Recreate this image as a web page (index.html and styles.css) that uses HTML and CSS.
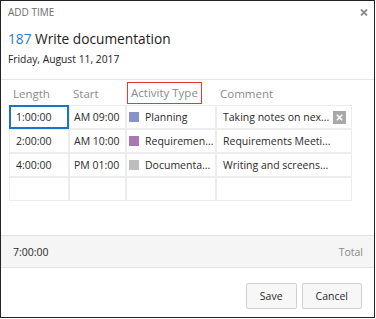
FILE: index.html
```html
<!DOCTYPE html>
<html lang="en">
<head>
  <meta charset="UTF-8">
  <title>Add Time</title>
  <link rel="stylesheet" href="styles.css">
</head>
<body>

<div class="dialog">
  <div class="dialog-head">
    <span class="dialog-title">ADD TIME</span>
    <svg class="close" width="8" height="7" viewBox="0 0 8 7">
      <path d="M1 0.5 L7 6.5 M7 0.5 L1 6.5" stroke="#8c8c8c" stroke-width="1.8"/>
    </svg>
  </div>

  <div class="task">
    <div class="task-name"><span class="task-id">187</span> Write documentation</div>
    <div class="task-date">Friday, August 11, 2017</div>
  </div>

  <table class="grid">
    <colgroup>
      <col class="col-length">
      <col class="col-start">
      <col class="col-type">
      <col class="col-comment">
    </colgroup>
    <thead>
      <tr>
        <th>Length</th>
        <th>Start</th>
        <th><span class="focused-head">Activity Type</span></th>
        <th>Comment</th>
      </tr>
    </thead>
    <tbody>
      <tr>
        <td class="active">1:00:00</td>
        <td>AM 09:00</td>
        <td><span class="swatch planning"></span>Planning</td>
        <td class="comment">Taking notes on nex...
          <span class="clear">
            <svg width="7" height="7" viewBox="0 0 7 7">
              <path d="M0.8 0.8 L6.2 6.2 M6.2 0.8 L0.8 6.2" stroke="#fff" stroke-width="1.6"/>
            </svg>
          </span>
        </td>
      </tr>
      <tr>
        <td>2:00:00</td>
        <td>AM 10:00</td>
        <td><span class="swatch requirements"></span>Requiremen...</td>
        <td>Requirements Meeti...</td>
      </tr>
      <tr>
        <td>4:00:00</td>
        <td>PM 01:00</td>
        <td><span class="swatch documentation"></span>Documenta...</td>
        <td>Writing and screens...</td>
      </tr>
      <tr>
        <td></td>
        <td></td>
        <td></td>
        <td></td>
      </tr>
    </tbody>
  </table>

  <div class="summary">
    <span>7:00:00</span>
    <span class="total">Total</span>
  </div>

  <div class="actions">
    <button>Save</button>
    <button>Cancel</button>
  </div>
</div>

</body>
</html>
```

FILE: styles.css
```css
body {
  margin: 0;
  font-family: "Open Sans", "Noto Sans", sans-serif;
  color: #2a2a2a;
  background: #fff;
}
.dialog {
  width: 375px;
  height: 318px;
  box-sizing: border-box;
  border: 1px solid #222;
  display: flex;
  flex-direction: column;
}
.dialog-head {
  display: flex;
  justify-content: space-between;
  align-items: center;
  padding: 3px 6px 0 7px;
  height: 16px;
}
.dialog-title {
  font-size: 10px;
  color: #6b6b6b;
}
.task {
  padding: 9px 7px 0 7px;
  height: 50px;
  border-bottom: 1px solid #e6e6e6;
}
.task-name {
  font-size: 13.7px;
  line-height: 20px;
  color: #222;
}
.task-id {
  color: #2a78c8;
}
.task-date {
  font-size: 10.3px;
  line-height: 16px;
  margin-top: 2px;
  color: #222;
}
.grid {
  border-collapse: separate;
  border-spacing: 0;
  margin: 1px 0 0 8px;
  width: 343px;
  table-layout: fixed;
  font-size: 10.5px;
}
.col-length { width: 60px; }
.col-start { width: 57px; }
.col-type { width: 90px; }
.col-comment { width: 136px; }
.grid th {
  font-weight: normal;
  text-align: left;
  color: #8a8a8a;
  font-size: 11.5px;
  height: 24px;
  padding: 0 0 0 4px;
  box-sizing: border-box;
}
.focused-head {
  display: inline-block;
  box-sizing: border-box;
  height: 22px;
  line-height: 20px;
  border: 1px solid #e53935;
  padding: 0 3px;
  margin-left: -3px;
}
.grid td {
  box-sizing: border-box;
  border: 1px solid #ececec;
  height: 24px;
  padding: 0 0 0 6px;
  white-space: nowrap;
  overflow: hidden;
  color: #2a2a2a;
}
.grid td:nth-child(2) {
  padding-left: 4px;
}
.grid td:nth-child(3) {
  padding-left: 2px;
}
.grid td.active {
  border-color: #1b75c4;
  box-shadow: inset 0 0 0 1px #1b75c4;
}
.comment {
  position: relative;
}
.clear {
  position: absolute;
  right: 5px;
  top: 5px;
  width: 13px;
  height: 13px;
  background: #a8a8a8;
  display: flex;
  align-items: center;
  justify-content: center;
}
.swatch {
  display: inline-block;
  width: 10px;
  height: 10px;
  margin-right: 6px;
  vertical-align: -1px;
}
.planning { background: #8593c9; }
.requirements { background: #aa78b0; }
.documentation { background: #bdbdbd; }
.summary {
  margin-top: 34px;
  height: 31px;
  background: #f5f5f5;
  border-top: 1px solid #e2e2e2;
  border-bottom: 1px solid #e2e2e2;
  display: flex;
  justify-content: space-between;
  align-items: center;
  padding: 0 11px 0 12px;
  font-size: 10.5px;
  color: #2a2a2a;
}
.total {
  color: #8a8a8a;
}
.actions {
  display: flex;
  justify-content: flex-end;
  gap: 5px;
  padding: 15px 12px 0 0;
}
button {
  font-family: inherit;
  font-size: 10.5px;
  color: #2a2a2a;
  background: #f7f7f7;
  border: 1px solid #cfcfcf;
  border-radius: 2px;
  height: 26px;
  padding: 0 13px;
}
```
